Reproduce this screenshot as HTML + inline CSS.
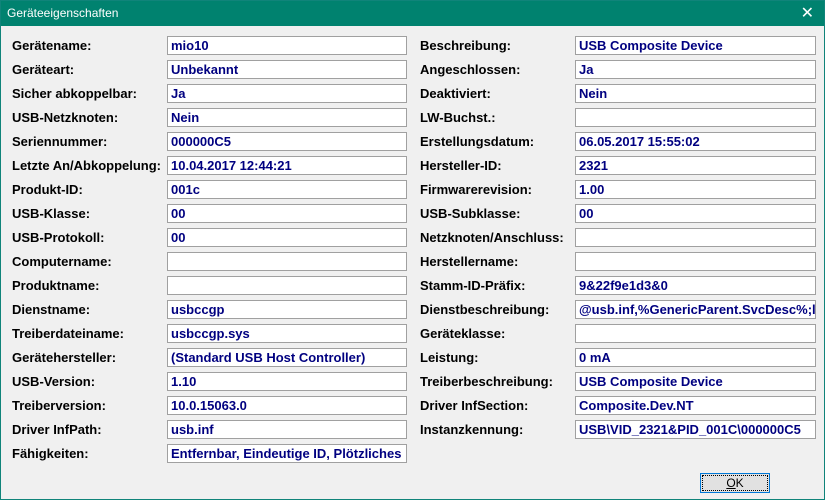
<!DOCTYPE html><html><head><style>
body{margin:0;width:825px;height:500px;overflow:hidden;background:#f0f0f0;font-family:"Liberation Sans",sans-serif;}
.win{position:absolute;left:0;top:0;width:823px;height:498px;border:1px solid #10847a;background:#f0f0f0}
.tb{position:absolute;left:0;top:0;width:823px;height:25px;background:#00826f;color:#fff;font-size:12px;line-height:25px;padding-left:6px;box-sizing:border-box}
.x{position:absolute;right:10px;top:0;font-size:16px;line-height:25px}
.l{position:absolute;font-size:13px;font-weight:bold;color:#000;line-height:19px;white-space:nowrap}
.b{position:absolute;height:19px;box-sizing:border-box;border:1px solid #a0a0a0;background:#fff;font-size:13px;font-weight:bold;color:#000080;line-height:17px;padding-left:3px;white-space:nowrap;overflow:hidden}
.ok{position:absolute;left:699px;top:472px;width:70px;height:20px;box-sizing:border-box;border:1px solid #0078d7;background:#e1e1e1;font-size:12px;text-align:center;line-height:18px;outline:1px dotted #000;outline-offset:-3px}
</style></head><body><div class="win">
<div class="tb">Geräteeigenschaften<span class="x">✕</span></div>
<div class="ok"><u>O</u>K</div>
</div>
<div style="position:absolute;left:0;top:0">
<div class="l" style="left:12px;top:36px">Gerätename:</div><div class="b" style="left:167px;top:36px;width:240px">mio10</div>
<div class="l" style="left:420px;top:36px">Beschreibung:</div><div class="b" style="left:575px;top:36px;width:241px">USB Composite Device</div>
<div class="l" style="left:12px;top:60px">Geräteart:</div><div class="b" style="left:167px;top:60px;width:240px">Unbekannt</div>
<div class="l" style="left:420px;top:60px">Angeschlossen:</div><div class="b" style="left:575px;top:60px;width:241px">Ja</div>
<div class="l" style="left:12px;top:84px">Sicher abkoppelbar:</div><div class="b" style="left:167px;top:84px;width:240px">Ja</div>
<div class="l" style="left:420px;top:84px">Deaktiviert:</div><div class="b" style="left:575px;top:84px;width:241px">Nein</div>
<div class="l" style="left:12px;top:108px">USB-Netzknoten:</div><div class="b" style="left:167px;top:108px;width:240px">Nein</div>
<div class="l" style="left:420px;top:108px">LW-Buchst.:</div><div class="b" style="left:575px;top:108px;width:241px"></div>
<div class="l" style="left:12px;top:132px">Seriennummer:</div><div class="b" style="left:167px;top:132px;width:240px">000000C5</div>
<div class="l" style="left:420px;top:132px">Erstellungsdatum:</div><div class="b" style="left:575px;top:132px;width:241px">06.05.2017 15:55:02</div>
<div class="l" style="left:12px;top:156px">Letzte An/Abkoppelung:</div><div class="b" style="left:167px;top:156px;width:240px">10.04.2017 12:44:21</div>
<div class="l" style="left:420px;top:156px">Hersteller-ID:</div><div class="b" style="left:575px;top:156px;width:241px">2321</div>
<div class="l" style="left:12px;top:180px">Produkt-ID:</div><div class="b" style="left:167px;top:180px;width:240px">001c</div>
<div class="l" style="left:420px;top:180px">Firmwarerevision:</div><div class="b" style="left:575px;top:180px;width:241px">1.00</div>
<div class="l" style="left:12px;top:204px">USB-Klasse:</div><div class="b" style="left:167px;top:204px;width:240px">00</div>
<div class="l" style="left:420px;top:204px">USB-Subklasse:</div><div class="b" style="left:575px;top:204px;width:241px">00</div>
<div class="l" style="left:12px;top:228px">USB-Protokoll:</div><div class="b" style="left:167px;top:228px;width:240px">00</div>
<div class="l" style="left:420px;top:228px">Netzknoten/Anschluss:</div><div class="b" style="left:575px;top:228px;width:241px"></div>
<div class="l" style="left:12px;top:252px">Computername:</div><div class="b" style="left:167px;top:252px;width:240px"></div>
<div class="l" style="left:420px;top:252px">Herstellername:</div><div class="b" style="left:575px;top:252px;width:241px"></div>
<div class="l" style="left:12px;top:276px">Produktname:</div><div class="b" style="left:167px;top:276px;width:240px"></div>
<div class="l" style="left:420px;top:276px">Stamm-ID-Präfix:</div><div class="b" style="left:575px;top:276px;width:241px">9&amp;22f9e1d3&amp;0</div>
<div class="l" style="left:12px;top:300px">Dienstname:</div><div class="b" style="left:167px;top:300px;width:240px">usbccgp</div>
<div class="l" style="left:420px;top:300px">Dienstbeschreibung:</div><div class="b" style="left:575px;top:300px;width:241px">@usb.inf,%GenericParent.SvcDesc%;l</div>
<div class="l" style="left:12px;top:324px">Treiberdateiname:</div><div class="b" style="left:167px;top:324px;width:240px">usbccgp.sys</div>
<div class="l" style="left:420px;top:324px">Geräteklasse:</div><div class="b" style="left:575px;top:324px;width:241px"></div>
<div class="l" style="left:12px;top:348px">Gerätehersteller:</div><div class="b" style="left:167px;top:348px;width:240px">(Standard USB Host Controller)</div>
<div class="l" style="left:420px;top:348px">Leistung:</div><div class="b" style="left:575px;top:348px;width:241px">0 mA</div>
<div class="l" style="left:12px;top:372px">USB-Version:</div><div class="b" style="left:167px;top:372px;width:240px">1.10</div>
<div class="l" style="left:420px;top:372px">Treiberbeschreibung:</div><div class="b" style="left:575px;top:372px;width:241px">USB Composite Device</div>
<div class="l" style="left:12px;top:396px">Treiberversion:</div><div class="b" style="left:167px;top:396px;width:240px">10.0.15063.0</div>
<div class="l" style="left:420px;top:396px">Driver InfSection:</div><div class="b" style="left:575px;top:396px;width:241px">Composite.Dev.NT</div>
<div class="l" style="left:12px;top:420px">Driver InfPath:</div><div class="b" style="left:167px;top:420px;width:240px">usb.inf</div>
<div class="l" style="left:420px;top:420px">Instanzkennung:</div><div class="b" style="left:575px;top:420px;width:241px">USB\VID_2321&amp;PID_001C\000000C5</div>
<div class="l" style="left:12px;top:444px">Fähigkeiten:</div><div class="b" style="left:167px;top:444px;width:240px">Entfernbar, Eindeutige ID, Plötzliches</div>
</div>
</body></html>
